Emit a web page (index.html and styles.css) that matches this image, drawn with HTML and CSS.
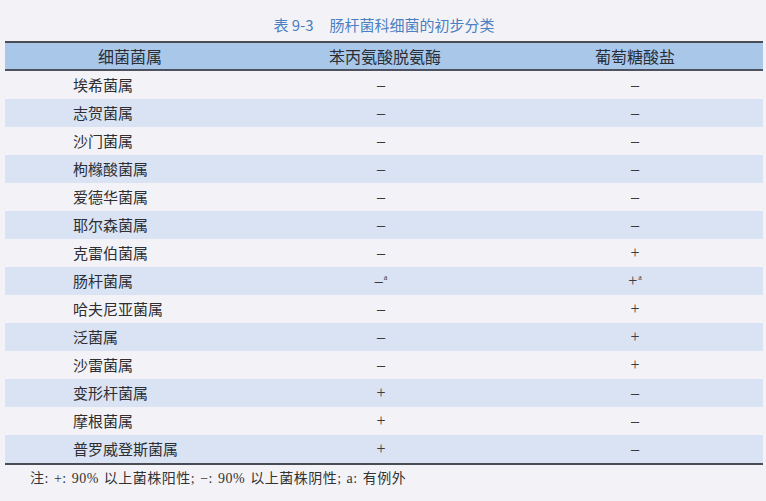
FILE: index.html
```html
<!DOCTYPE html>
<html lang="zh-CN">
<head>
<meta charset="utf-8">
<title>表 9-3 肠杆菌科细菌的初步分类</title>
<link rel="stylesheet" href="styles.css">
</head>
<body>
<div class="page">
  <div class="title">表 9-3<span class="gap"></span>肠杆菌科细菌的初步分类</div>
  <table class="tbl">
    <colgroup><col class="w1"><col class="w2"><col class="w3"></colgroup>
    <thead>
      <tr><th class="c1">细菌菌属</th><th class="c2">苯丙氨酸脱氨酶</th><th class="c3">葡萄糖酸盐</th></tr>
    </thead>
    <tbody>
      <tr><td class="c1">埃希菌属</td><td class="c2"><span class="s">–</span></td><td class="c3"><span class="s">–</span></td></tr>
      <tr class="alt"><td class="c1">志贺菌属</td><td class="c2"><span class="s">–</span></td><td class="c3"><span class="s">–</span></td></tr>
      <tr><td class="c1">沙门菌属</td><td class="c2"><span class="s">–</span></td><td class="c3"><span class="s">–</span></td></tr>
      <tr class="alt"><td class="c1">枸橼酸菌属</td><td class="c2"><span class="s">–</span></td><td class="c3"><span class="s">–</span></td></tr>
      <tr><td class="c1">爱德华菌属</td><td class="c2"><span class="s">–</span></td><td class="c3"><span class="s">–</span></td></tr>
      <tr class="alt"><td class="c1">耶尔森菌属</td><td class="c2"><span class="s">–</span></td><td class="c3"><span class="s">–</span></td></tr>
      <tr><td class="c1">克雷伯菌属</td><td class="c2"><span class="s">–</span></td><td class="c3"><span class="s">+</span></td></tr>
      <tr class="alt"><td class="c1">肠杆菌属</td><td class="c2"><span class="s">–<sup>a</sup></span></td><td class="c3"><span class="s">+<sup>a</sup></span></td></tr>
      <tr><td class="c1">哈夫尼亚菌属</td><td class="c2"><span class="s">–</span></td><td class="c3"><span class="s">+</span></td></tr>
      <tr class="alt"><td class="c1">泛菌属</td><td class="c2"><span class="s">–</span></td><td class="c3"><span class="s">+</span></td></tr>
      <tr><td class="c1">沙雷菌属</td><td class="c2"><span class="s">–</span></td><td class="c3"><span class="s">+</span></td></tr>
      <tr class="alt"><td class="c1">变形杆菌属</td><td class="c2"><span class="s">+</span></td><td class="c3"><span class="s">–</span></td></tr>
      <tr><td class="c1">摩根菌属</td><td class="c2"><span class="s">+</span></td><td class="c3"><span class="s">–</span></td></tr>
      <tr class="alt"><td class="c1">普罗威登斯菌属</td><td class="c2"><span class="s">+</span></td><td class="c3"><span class="s">–</span></td></tr>
    </tbody>
  </table>
  <div class="note">注: +: 90% 以上菌株阳性; −: 90% 以上菌株阴性; a: 有例外</div>
</div>
</body>
</html>
```

FILE: styles.css
```css
html, body {
  margin: 0;
  padding: 0;
  background: #f3f3f7;
}
.page {
  width: 766px;
  height: 501px;
  padding-top: 14px;
  box-sizing: border-box;
  font-family: "Noto Sans CJK SC", sans-serif;
  color: #2e2e33;
}
.title {
  text-align: center;
  font-size: 15px;
  line-height: 22px;
  color: #4a7fc2;
  padding-left: 2px;
  margin-bottom: 5px;
}
.title .gap {
  display: inline-block;
  width: 16px;
}
.tbl {
  margin-left: 5px;
  width: 758px;
  table-layout: fixed;
  border-collapse: collapse;
  border-top: 2px solid #4a4c55;
  border-bottom: 2px solid #4a4c55;
  font-size: 15px;
}
.w1 { width: 250px; }
.w2 { width: 252px; }
.w3 { width: 256px; }
.tbl thead th {
  background: #a9c8e9;
  height: 26px;
  padding: 0;
  font-weight: normal;
  font-size: 16px;
  color: #2a2d36;
  border-bottom: 2px solid #4e5260;
}
.tbl td {
  height: 28px;
  padding: 0;
  line-height: 28px;
  vertical-align: middle;
}
.tbl tr.alt td {
  background: #d9e3f3;
}
.tbl th.c1 { text-align: center; padding-right: 0; }
.tbl td.c1 { text-align: left; padding-left: 68px; }
.tbl .c2 { text-align: center; }
.tbl th.c2 { padding-left: 8px; }
.tbl .c3 { text-align: center; }
.tbl .s {
  display: inline-block;
  vertical-align: top;
  height: 28px;
  line-height: 28px;
  font-family: "Liberation Serif", serif;
  font-size: 16px;
  color: #3a3a40;
}
.tbl sup {
  font-size: 8px;
  line-height: 0;
  vertical-align: 6px;
  margin-left: 1px;
}
.note {
  margin-top: 5px;
  padding-left: 30px;
  font-family: "Liberation Serif", "Noto Sans CJK SC", serif;
  font-size: 14px;
  letter-spacing: 0.5px;
  word-spacing: 1px;
  line-height: 18px;
  color: #333;
}
```
